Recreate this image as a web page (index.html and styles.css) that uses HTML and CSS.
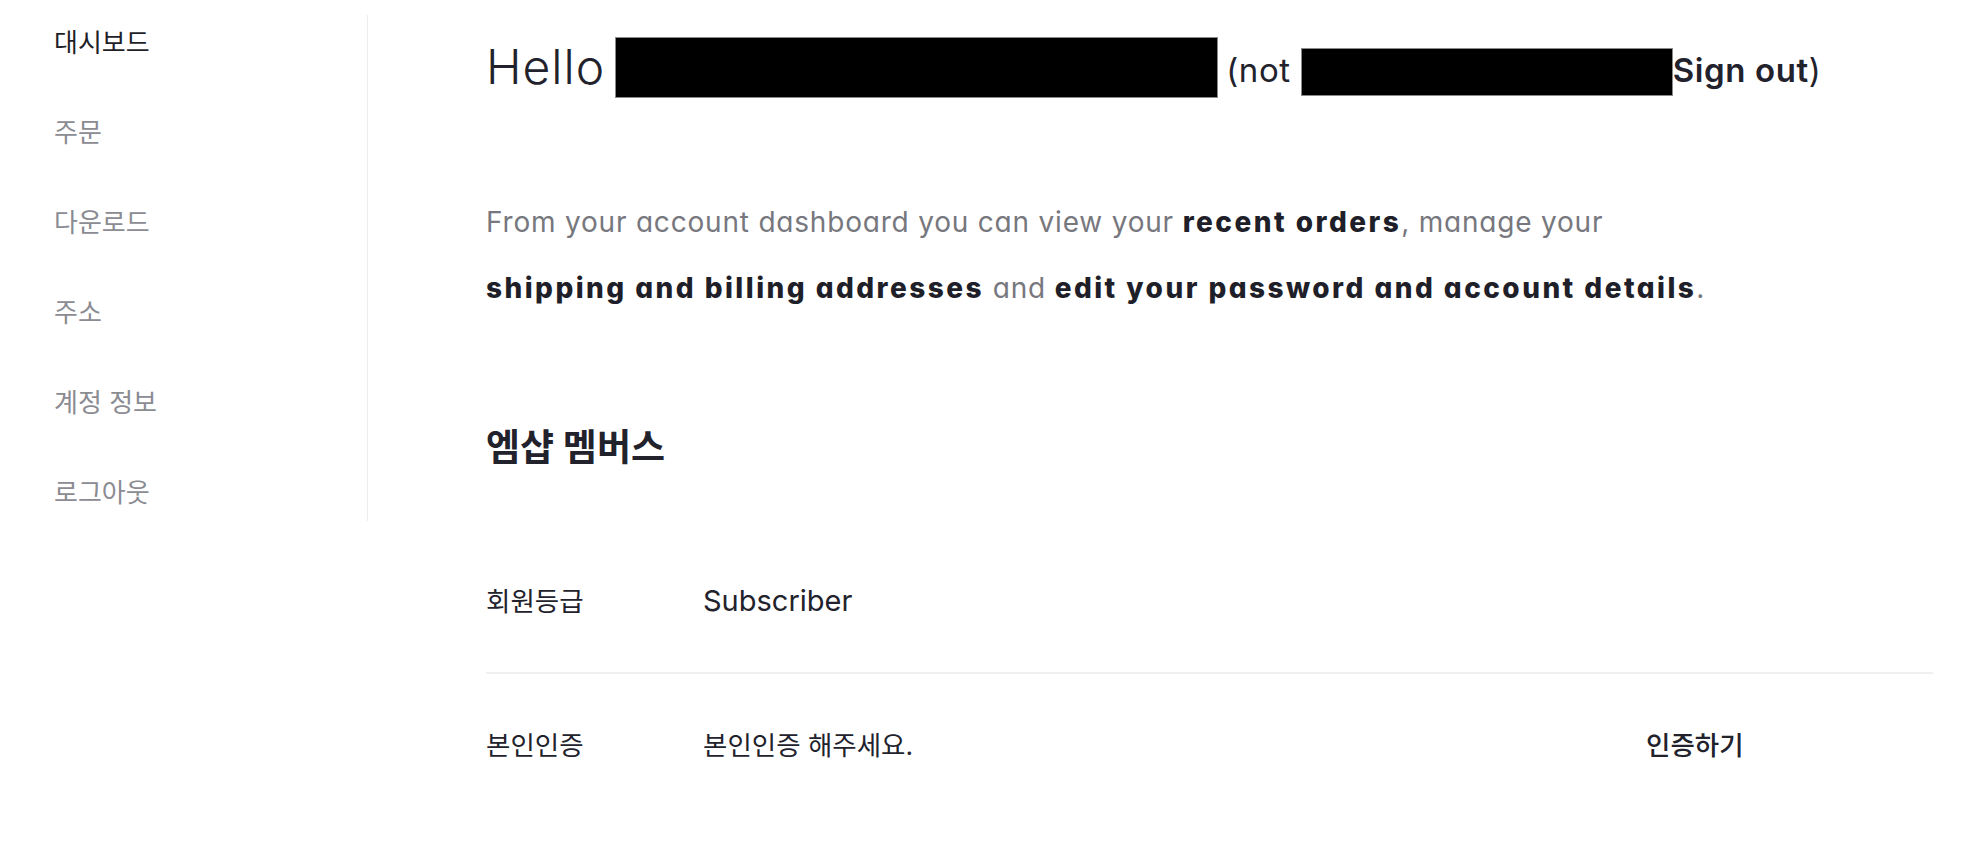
FILE: index.html
```html
<!DOCTYPE html>
<html>
<head>
  <meta charset="utf-8">
  <meta name="viewport" content="width=device-width">
  <title>내 계정</title>

  <link rel="stylesheet" href="styles.css">

</head>
<body>
  <div id="account">

    <div class="sidebar">
      <ul class="menu">
        <li class="active"><a href="#">대시보드</a></li>
        <li><a href="#">주문</a></li>
        <li><a href="#">다운로드</a></li>
        <li><a href="#">주소</a></li>
        <li><a href="#">계정 정보</a></li>
        <li><a href="#">로그아웃</a></li>
      </ul>
    </div>

    <div class="content">
      <h2 class="hello">
        <span class="helloWord">Hello</span>
        <span class="hidden bigHidden"></span>
        <span class="notText">(not <span class="hidden smallHidden"></span><a href="#" class="signOut">Sign out</a>)</span>
      </h2>

      <p class="intro">
        From your account dashboard you can view your <b>recent orders</b>, manage your
        <b>shipping and billing addresses</b> and <b>edit your password and account details</b>.
      </p>

      <h3 class="memberTitle">엠샵 멤버스</h3>

      <div class="memberTable">
        <div class="row">
          <span class="label">회원등급</span>
          <span class="value latin">Subscriber</span>
          <span class="action"></span>
        </div>
        <div class="row">
          <span class="label">본인인증</span>
          <span class="value">본인인증 해주세요.</span>
          <a href="#" class="action">인증하기</a>
        </div>
      </div>
    </div>

  </div>
</body>
</html>
```

FILE: styles.css
```css
* {
  box-sizing: border-box;
}

body {
  margin: 0;
  background: #ffffff;
  color: #22222c;
  font-family: "Inter", "Noto Sans CJK KR", sans-serif;
  font-feature-settings: "cv11" 1;
}

a {
  color: inherit;
  text-decoration: none;
}

#account {
  display: flex;
  align-items: flex-start;
}

/* left menu */
.sidebar {
  width: 368px;
  margin-top: 15px;
  padding-left: 54px;
  border-right: 1px solid #ececec;
}

.menu {
  margin: 0;
  padding: 0;
  list-style: none;
  display: flex;
  flex-direction: column;
  gap: 34px;
}

.menu li {
  line-height: 56px;
  font-size: 26px;
  color: #8b8b92;
}

.menu li.active {
  color: #1f1f28;
}

/* main part */
.content {
  flex: 1;
  padding: 0 49px 0 118px;
}

.hello {
  margin: 31px 0 0 0;
  height: 72px;
  line-height: 72px;
  font-weight: 400;
  display: flex;
  align-items: center;
  white-space: nowrap;
}

.helloWord {
  font-size: 48px;
  font-weight: 300;
  letter-spacing: 1px;
}

.hidden {
  display: inline-block;
  background: #000;
  border: 1px solid #8a8a8a;
}

.bigHidden {
  width: 603px;
  height: 61px;
  margin-left: 10px;
  margin-right: 8px;
}

.notText {
  font-size: 33px;
  letter-spacing: 0.6px;
  line-height: 60px;
  margin-top: 6px;
  display: flex;
  align-items: center;
}

.smallHidden {
  width: 372px;
  height: 48px;
  margin-left: 10px;
  margin-top: 4px;
}

.signOut {
  font-weight: 600;
}

.intro {
  margin: 86px 0 0 0;
  font-size: 28px;
  letter-spacing: 0.8px;
  line-height: 66px;
  color: #77777e;
  max-width: 1236px;
}

.intro b {
  font-weight: 800;
  letter-spacing: 2.45px;
  color: #1f1f2a;
}

.memberTitle {
  margin: 102px 0 0 0;
  font-size: 37px;
  line-height: 50px;
  font-weight: 700;
}

.memberTable {
  margin-top: 57px;
}

.row {
  display: grid;
  grid-template-columns: 217px 943px 1fr;
  align-items: center;
  padding: 56px 0;
  line-height: 30px;
  font-size: 26.5px;
}

.row + .row {
  border-top: 2px solid #f0f0f0;
}

.latin {
  font-size: 29px;
}

.action {
  font-weight: 500;
}
```
